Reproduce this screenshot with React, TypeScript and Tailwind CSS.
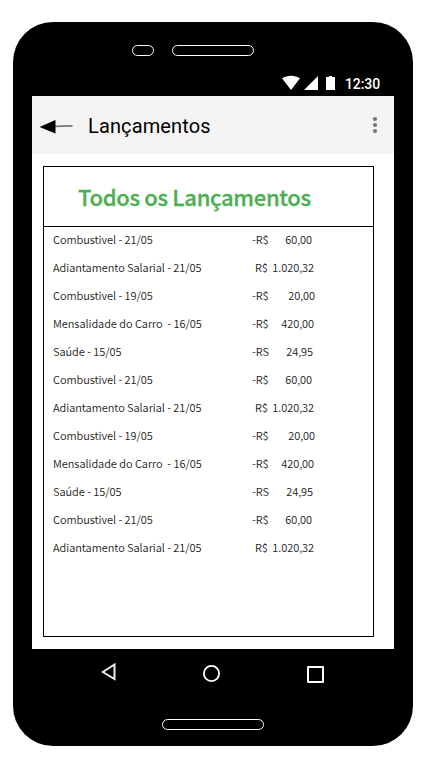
type Entry = { label: string; sign: string; amount: string; signPad: string; end: string };

const fuel: Entry = { label: 'Combustivel - 21/05', sign: '-R$', amount: '60,00', signPad: 'pl-0', end: 'w-[60px]' };
const advance: Entry = { label: 'Adiantamento Salarial - 21/05', sign: 'R$', amount: '1.020,32', signPad: 'pl-[3px]', end: 'w-[62px]' };
const fuelOld: Entry = { label: 'Combustivel - 19/05', sign: '-R$', amount: '20,00', signPad: 'pl-0', end: 'w-[63px]' };
const car: Entry = { label: 'Mensalidade do Carro  - 16/05', sign: '-R$', amount: '420,00', signPad: 'pl-0', end: 'w-[62px]' };
const health: Entry = { label: 'Saúde - 15/05', sign: '-RS', amount: '24,95', signPad: 'pl-0', end: 'w-[61px]' };

const entries: Entry[] = [fuel, advance, fuelOld, car, health, fuel, advance, fuelOld, car, health, fuel, advance];

function StatusBar() {
  return (
    <div className="flex h-[22px] items-start pl-[250px] text-white">
      <svg width="54" height="16" viewBox="0 0 54 16" fill="currentColor">
        <path d="M0 4.3C5.2.9 12.8.9 18 4.3L9 16Z" />
        <path d="M22 16H36V2Z" />
        <path d="M44 3H47V2H50V3H53V16H44Z" />
      </svg>
      <span className="ml-[9px] font-[Roboto] text-[14px] leading-[20px] font-medium tracking-[-0.1px]">12:30</span>
    </div>
  );
}

function AppBar() {
  return (
    <header className="flex h-[58px] items-center bg-[#f4f4f4] pl-[7px]">
      <svg className="mt-px" width="35" height="16" viewBox="0 0 35 16">
        <path d="M14 8.4L33.5 7.8" stroke="#777" strokeWidth="1.8" />
        <path d="M0.5 9L16.5 2V15.5Z" fill="#000" />
      </svg>
      <h1 className="ml-[14px] w-[252px] pt-[2px] font-[Roboto] text-[20px] leading-6 tracking-[0.12px] text-black">Lançamentos</h1>
      <svg className="ml-[32px]" width="6" height="18" viewBox="0 0 6 18" fill="#757575">
        <circle cx="3" cy="3" r="2.1" />
        <circle cx="3" cy="9" r="2.1" />
        <circle cx="3" cy="15" r="2.1" />
      </svg>
    </header>
  );
}

export default function App() {
  return (
    <div className="h-[770px] w-[436px] overflow-hidden bg-white pt-[22px] pl-[13px]">
      <div className="flex h-[724px] w-[400px] flex-col rounded-[40px] bg-black px-[19px]">
        <div className="flex h-[52px] items-start gap-[18px] pt-[23px] pl-[100px]">
          <div className="h-[11px] w-[22px] rounded-full border border-white" />
          <div className="h-[11px] w-[82px] rounded-full border border-white" />
        </div>
        <StatusBar />
        <main className="h-[553px] w-[362px] bg-white">
          <AppBar />
          <section className="mt-[12px] ml-[11px] h-[471px] w-[331px] border border-black font-['Noto_Sans_CJK_SC',sans-serif]">
            <h2 className="h-[60px] border-b border-black pl-[34px] text-[22px] leading-[59px] font-medium tracking-[-0.3px] whitespace-nowrap text-[#4caf50] [-webkit-text-stroke:0.3px_#4caf50]">
              Todos os Lançamentos
            </h2>
            <ul className="-mt-[2px] pl-[9px] text-[11px] font-[350] tracking-[-0.06px] text-[#1c1c1c]">
              {entries.map((e, i) => (
                <li key={i} className="flex h-7 items-center whitespace-pre">
                  <span className="w-[199px]">{e.label}</span>
                  <span className={`flex justify-between ${e.end} ${e.signPad}`}>
                    <span>{e.sign}</span>
                    <span>{e.amount}</span>
                  </span>
                </li>
              ))}
            </ul>
          </section>
        </main>
        <nav className="flex h-[70px] items-start pt-[13px] pl-[69px]">
          <svg width="16" height="20" viewBox="0 0 16 20" fill="none" stroke="#eee" strokeWidth="2">
            <path d="M13.5 2.5V17L1.8 10Z" />
          </svg>
          <svg className="mt-[3px] ml-[86px]" width="17" height="17" viewBox="0 0 17 17" fill="none" stroke="#fff" strokeWidth="1.8">
            <circle cx="8.5" cy="8.5" r="7.6" />
          </svg>
          <div className="mt-[4px] ml-[87px] size-[17px] rounded-[1px] border-2 border-white" />
        </nav>
        <div className="ml-[130px] h-[11px] w-[102px] rounded-full border border-white" />
      </div>
    </div>
  );
}
